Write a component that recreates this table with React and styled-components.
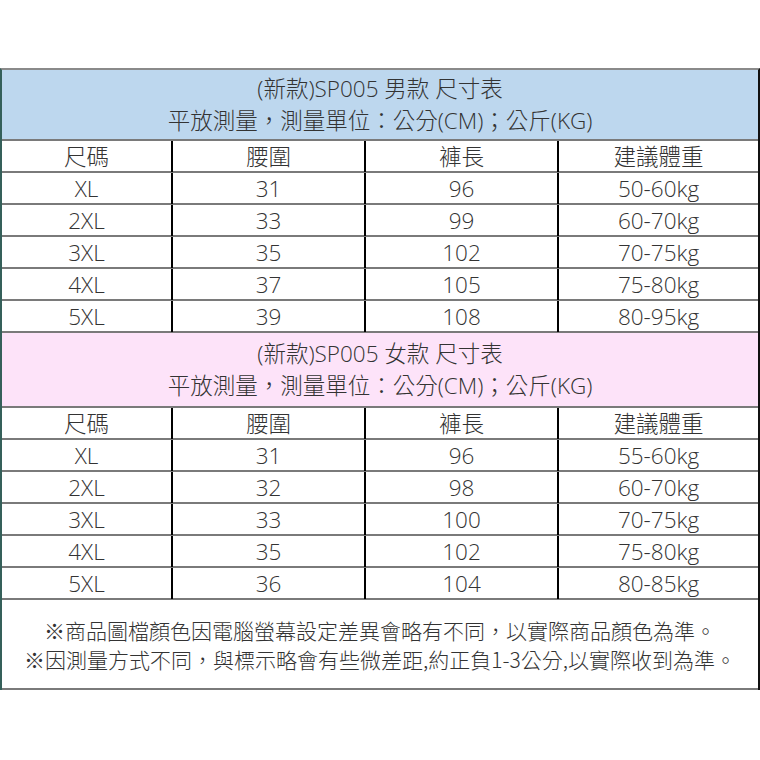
import React from "react";
import styled, { createGlobalStyle } from "styled-components";

const Global = createGlobalStyle`
  html, body { margin: 0; padding: 0; background: #fff; }
  body { width: 760px; height: 760px; overflow: hidden; }
`;

const Sheet = styled.div`
  margin-top: 68px;
  width: 760px;
  box-sizing: border-box;
  border-top: 2px solid #8a8a8a;
  border-left: 2px solid #35605a;
  border-right: 2px solid #111;
  font-family: "Open Sans", "Noto Sans CJK TC", sans-serif;
  font-weight: 300;
  color: #333;
  font-size: 22.5px;
`;

const Band = styled.div`
  background: ${(p) => p.$bg};
  height: ${(p) => p.$h}px;
  border-bottom: 2px solid #7a7a7a;
  display: flex;
  flex-direction: column;
  justify-content: center;
  align-items: center;
  line-height: 32px;
  white-space: nowrap;
`;

const Row = styled.div`
  display: grid;
  grid-template-columns: 171px 193px 193px 1fr;
  height: 30px;
  border-bottom: 2px solid #7a7a7a;
`;

const Cell = styled.div`
  display: flex;
  align-items: center;
  justify-content: center;
  line-height: 30px;
  padding-top: 1px;
  border-right: 2px solid #000;
  &:last-child { border-right: none; }
`;

const Footer = styled.div`
  height: 90px;
  border-bottom: 2px solid #7a7a7a;
  display: flex;
  flex-direction: column;
  justify-content: center;
  align-items: center;
  line-height: 29px;
  font-family: "Noto Sans CJK TC", sans-serif;
  font-size: 21px;
  white-space: nowrap;
  padding-top: 2px;
  box-sizing: border-box;
`;

const headers = ["尺碼", "腰圍", "褲長", "建議體重"];
const men = [
  ["XL", "31", "96", "50-60kg"],
  ["2XL", "33", "99", "60-70kg"],
  ["3XL", "35", "102", "70-75kg"],
  ["4XL", "37", "105", "75-80kg"],
  ["5XL", "39", "108", "80-95kg"],
];
const women = [
  ["XL", "31", "96", "55-60kg"],
  ["2XL", "32", "98", "60-70kg"],
  ["3XL", "33", "100", "70-75kg"],
  ["4XL", "35", "102", "75-80kg"],
  ["5XL", "36", "104", "80-85kg"],
];

function Table({ title, bg, h, rows }) {
  return (
    <>
      <Band $bg={bg} $h={h}>
        <div>{title}</div>
        <div>平放測量，測量單位：公分(CM)；公斤(KG)</div>
      </Band>
      <Row>
        {headers.map((c) => (
          <Cell key={c}>{c}</Cell>
        ))}
      </Row>
      {rows.map((r) => (
        <Row key={r[0]}>
          {r.map((c, i) => (
            <Cell key={i}>{c}</Cell>
          ))}
        </Row>
      ))}
    </>
  );
}

export default function App() {
  return (
    <>
      <Global />
      <Sheet>
        <Table title="(新款)SP005 男款 尺寸表" bg="#bdd7ee" h={69} rows={men} />
        <Table title="(新款)SP005 女款 尺寸表" bg="#fde3f9" h={73} rows={women} />
        <Footer>
          <div>※商品圖檔顏色因電腦螢幕設定差異會略有不同，以實際商品顏色為準。</div>
          <div>※因測量方式不同，與標示略會有些微差距,約正負1-3公分,以實際收到為準。</div>
        </Footer>
      </Sheet>
    </>
  );
}
